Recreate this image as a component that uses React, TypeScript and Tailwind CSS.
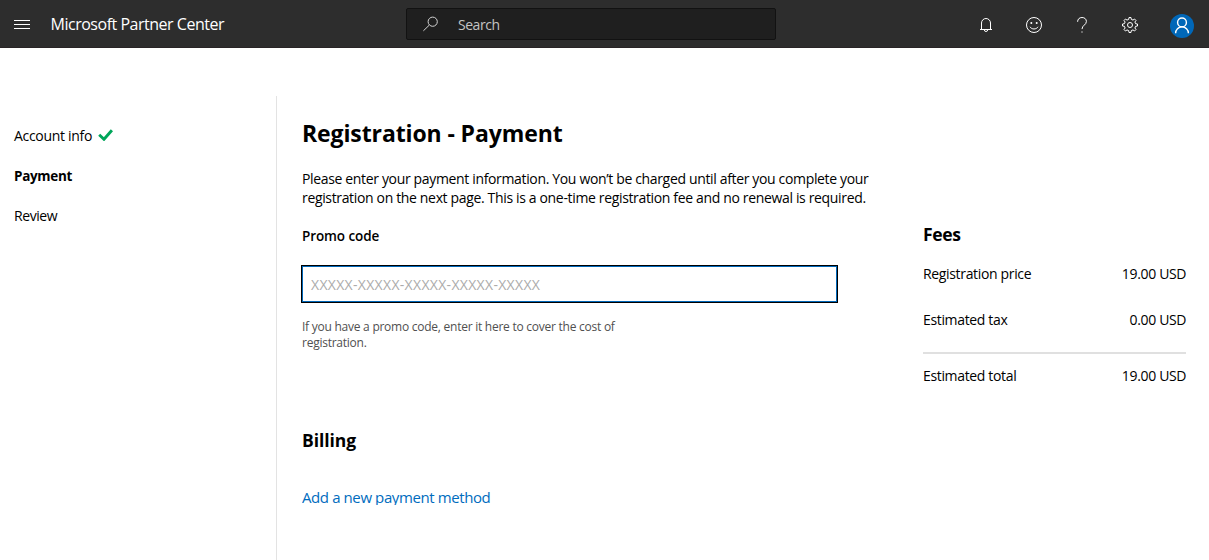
import { type ReactNode } from 'react';

function HeaderIcon({ children }: { children: ReactNode }) {
  return (
    <button className="flex h-12 w-12 items-center justify-center">{children}</button>
  );
}

function FeeRow({ label, value }: { label: string; value: string }) {
  return (
    <div className="flex h-[19px] items-center justify-between whitespace-nowrap text-[14px] leading-[19px]">
      <span className="tracking-[-0.34px]">{label}</span>
      <span className="-mr-[0.2px] tracking-[-0.34px]">{value}</span>
    </div>
  );
}

export default function App() {
  return (
    <div className="flex h-[560px] w-[1209px] flex-col overflow-hidden bg-white font-['Open_Sans',sans-serif] text-black">
      <header className="flex h-12 shrink-0 items-center border-b border-[#292426] bg-[#2d2d2d] text-white">
        <button className="ml-[14px] mt-[2px] flex w-4 flex-col gap-[3px]">
          <span className="h-px w-4 bg-white" />
          <span className="h-px w-4 bg-white" />
          <span className="h-px w-4 bg-white" />
        </button>
        <div className="ml-[20.5px] mt-px w-[355.5px] whitespace-nowrap text-[16px] leading-6 tracking-[-0.48px]">Microsoft Partner Center</div>
        <div className="mt-px flex h-8 w-[370px] items-center rounded-[2px] border border-[#121212] bg-[#1f1f1f]">
          <svg className="ml-4 h-4 w-4" viewBox="0 0 16 16" fill="none" stroke="#d4d4d4" strokeWidth="1">
            <circle cx="9.7" cy="5.7" r="4.6" />
            <path d="M6.3 9.1 0.4 14.8" />
          </svg>
          <span className="ml-[19px] mt-[2px] text-[14px] leading-5 tracking-[-0.46px] text-[#c4c4c4]">Search</span>
        </div>
        <div className="-mr-px ml-auto mt-[2px] flex items-center">
          <HeaderIcon>
            <svg className="h-4 w-4" viewBox="0 0 16 16" fill="none" stroke="#fff">
              <path d="M2 12.5h12M3.5 12.5V6a4.5 4.5 0 0 1 9 0v6.5M6.3 12.8a1.7 1.7 0 0 0 3.4 0" />
            </svg>
          </HeaderIcon>
          <HeaderIcon>
            <svg className="h-4 w-4" viewBox="0 0 16 16" fill="none" stroke="#fff">
              <circle cx="8" cy="8" r="7.5" />
              <path d="M4 9.8c1.6 2.9 6.4 2.9 8 0" />
              <circle cx="5.3" cy="6" r="1" fill="#fff" stroke="none" />
              <circle cx="10.7" cy="6" r="1" fill="#fff" stroke="none" />
            </svg>
          </HeaderIcon>
          <HeaderIcon>
            <svg className="-ml-px h-4 w-4" viewBox="0 0 16 16" fill="none" stroke="#fff">
              <path d="M3.6 4.8C3.6 2.2 5.4.5 8 .5s4.4 1.6 4.4 4c0 3.4-4.4 3.8-4.4 7.6" />
              <path d="M7.4 15h1.2" strokeWidth="1.2" />
            </svg>
          </HeaderIcon>
          <HeaderIcon>
            <svg className="h-4 w-4" viewBox="0 0 16 16" fill="none" stroke="#fff" strokeWidth="1">
              <path d="M6.7 2.4 7 .5h2l.3 1.9 1.7.7 1.5-1.1 1.5 1.5-1.1 1.5.7 1.7 1.9.3v2l-1.9.3-.7 1.7 1.1 1.5-1.5 1.5-1.5-1.1-1.7.7-.3 1.9H7l-.3-1.9-1.7-.7L3.5 14 2 12.5 3.1 11l-.7-1.7L.5 9V7l1.9-.3L3.1 5 2 3.5 3.5 2 5 3.1Z" />
              <circle cx="8" cy="8" r="2.5" />
            </svg>
          </HeaderIcon>
          <span className="mt-[2px] flex h-12 w-[56px] items-center justify-center">
            <svg className="h-6 w-6" viewBox="0 0 24 24" fill="none">
              <circle cx="12" cy="12" r="12" fill="#0067b8" />
              <circle cx="12" cy="8.4" r="4.4" stroke="#fff" strokeWidth="1.4" />
              <path d="M5.6 19.2a6.4 6.4 0 0 1 12.8 0" stroke="#fff" strokeWidth="1.4" />
            </svg>
          </span>
        </div>
      </header>

      <div className="flex grow pt-12">
        <nav className="flex w-[277px] shrink-0 flex-col gap-5 border-r border-[#e3e3e3] pl-[14px] pt-[30px] text-[14px] leading-5">
          <div className="flex items-center">
            <span className="tracking-[-0.3px]">Account info</span>
            <svg className="mb-[3px] ml-[6px] h-3 w-[15px]" viewBox="0 0 15 12" fill="none">
              <path d="M1.2 5.7 6 10.3 13.9 1.2" stroke="#00a65a" strokeWidth="2.9" />
            </svg>
          </div>
          <div className="text-[13.5px] font-bold tracking-[-0.32px]">Payment</div>
          <div className="tracking-[-0.43px]">Review</div>
        </nav>

        <main className="flex w-[646px] shrink-0 flex-col pl-[25px]">
          <h1 className="mt-[21px] whitespace-nowrap text-[23px] font-bold leading-8 tracking-[-0.11px]">Registration - Payment</h1>
          <p className="mt-5 whitespace-nowrap text-[14px] leading-[19px] tracking-[-0.345px]">
            Please enter your payment information. You won’t be charged until after you complete your
            <br />
            registration on the next page. This is a one-time registration fee and no renewal is required.
          </p>
          <label className="mt-[19px] text-[13.5px] font-semibold leading-5 tracking-[-0.1px]">Promo code</label>
          <div className="-ml-px mt-[19px] flex h-[38px] w-[537px] items-center border border-black">
            <div className="flex h-full w-full items-center border border-[#0067b8] pl-2 pt-px text-[14px] tracking-[0.31px] text-[#ababab]">XXXXX-XXXXX-XXXXX-XXXXX-XXXXX</div>
          </div>
          <p className="mt-4 whitespace-nowrap text-[12px] leading-4 tracking-[-0.25px] text-[#505050]">
            If you have a promo code, enter it here to cover the cost of
            <br />
            registration.
          </p>
          <h2 className="mt-[77px] text-[17.5px] font-bold leading-6 tracking-[-0.07px]">Billing</h2>
          <div className="mt-[35px] h-[18px] overflow-hidden whitespace-nowrap text-[15px] leading-[20px] tracking-[-0.4px] text-[#006cbe]">
            <a className="block">Add a new payment method</a>
          </div>
        </main>

        <section className="w-[263px] shrink-0 pt-[126px]">
          <h2 className="text-[17.5px] font-bold leading-6 tracking-[-0.35px]">Fees</h2>
          <div className="mt-[18px]"><FeeRow label="Registration price" value="19.00 USD" /></div>
          <div className="mt-[27px]"><FeeRow label="Estimated tax" value="0.00 USD" /></div>
          <hr className="mb-[13px] mt-[23px] border-t-2 border-[#e0e0e0]" />
          <div className="-mt-px"><FeeRow label="Estimated total" value="19.00 USD" /></div>
        </section>
      </div>
    </div>
  );
}
